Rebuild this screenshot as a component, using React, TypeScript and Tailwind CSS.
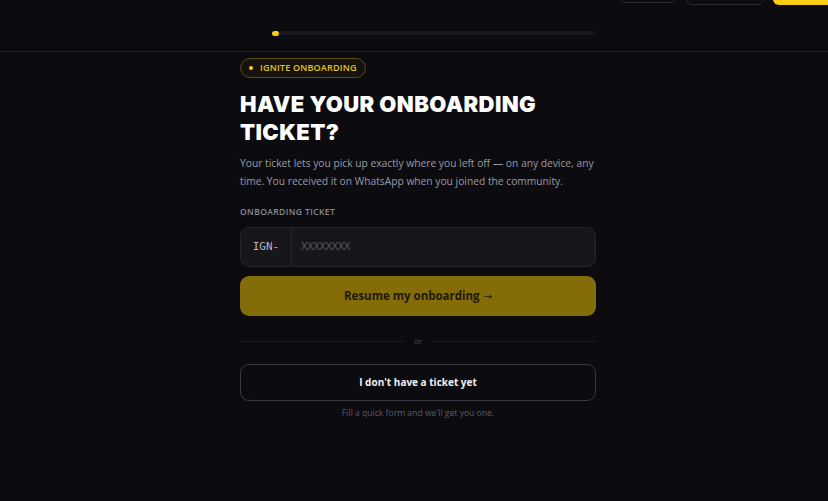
import React from "react";

export default function App() {
  return (
    <div className="min-h-[501px] w-full bg-[#0b0b10] overflow-hidden" style={{ fontFamily: '"Open Sans", "Noto Sans", sans-serif' }}>
      <header className="h-[52px] border-b border-[#1c1c22] flex flex-col">
        <div className="-mt-[31px] h-[36px] flex justify-end items-start gap-[9px]">
          <div className="w-[57px] h-[34px] rounded-md border border-[#2a2a31]" />
          <div className="w-[78px] h-[36px] rounded-md border border-[#2a2a31]" />
          <div className="w-[55px] h-[36px] rounded-l-md bg-[#facc15]" />
        </div>
        <div className="mt-[26px] flex justify-center">
          <div className="w-[324px] ml-[40px] h-[4px] rounded-full bg-[#17171d] flex items-center">
            <div className="w-[7px] h-[5px] rounded-full bg-[#facc15]" />
          </div>
        </div>
      </header>
      <main className="flex justify-center">
        <div className="w-[356px] ml-[8px] flex flex-col pt-[6px]">
          <div className="self-start h-[20px] px-[8px] rounded-full border border-[#5b4c0f] bg-[#15130b] flex items-center gap-[7px]">
            <span className="w-[4px] h-[4px] rounded-full bg-[#facc15]" />
            <span className="text-[9px] font-semibold text-[#e6c01e] tracking-[0.2px]">IGNITE ONBOARDING</span>
          </div>
          <h1 className="mt-[12px] text-[22px] leading-[28px] font-black text-white tracking-[0.4px]" style={{ fontFamily: 'Inter, "Noto Sans", sans-serif' }}>
            HAVE YOUR ONBOARDING<br />TICKET?
          </h1>
          <p className="mt-[8px] text-[10.25px] leading-[18px] text-[#9b9ba5]">
            Your ticket lets you pick up exactly where you left off — on any device, any time. You received it on WhatsApp when you joined the community.
          </p>
          <div className="mt-[16px] text-[8.5px] leading-[11px] font-semibold tracking-[0.4px] text-[#8b8b95]">ONBOARDING TICKET</div>
          <div className="mt-[10px] h-[40px] rounded-[9px] border border-[#25252c] bg-[#16161b] flex items-stretch">
            <div className="w-[51px] border-r border-[#25252c] flex items-center justify-center text-[11px] text-[#b8b8c0]" style={{ fontFamily: '"DejaVu Sans Mono", monospace' }}>IGN-</div>
            <div className="flex-1 flex items-center pl-[9px] text-[11px] text-[#55555e] tracking-[-0.5px]" style={{ fontFamily: '"DejaVu Sans Mono", monospace' }}>XXXXXXXX</div>
          </div>
          <button className="mt-[9px] h-[40px] rounded-[9px] bg-[#846c08] text-[11.5px] font-bold text-[#1e1a08] flex items-center justify-center gap-[4px]">
            <span>Resume my onboarding</span>
            <span style={{ fontFamily: '"DejaVu Sans", sans-serif' }} className="text-[10px] font-normal">→</span>
          </button>
          <div className="mt-[20px] h-[10px] flex items-center gap-[10px]">
            <div className="flex-1 h-px bg-[#1d1d23]" />
            <span className="text-[8px] text-[#4a4a52] leading-[10px]">or</span>
            <div className="flex-1 h-px bg-[#1d1d23]" />
          </div>
          <button className="mt-[18px] h-[37px] rounded-[9px] border border-[#3a3a42] bg-[#0b0b10] text-[10px] font-bold text-[#f2f2f4] flex items-center justify-center">
            I don't have a ticket yet
          </button>
          <p className="mt-[6px] leading-[12px] text-center text-[8.6px] text-[#5b5b64]">Fill a quick form and we'll get you one.</p>
        </div>
      </main>
    </div>
  );
}
